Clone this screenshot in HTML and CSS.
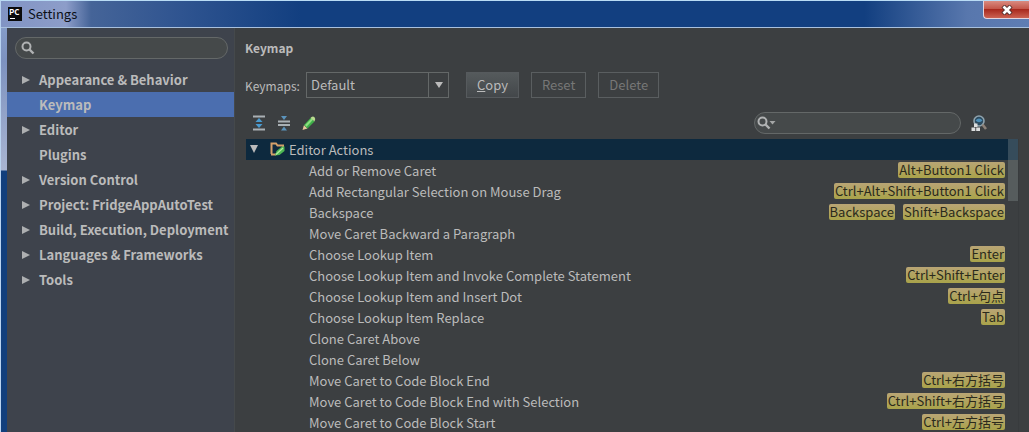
FILE: index.html
```html
<!DOCTYPE html>
<html lang="en">
<head>
    <meta charset="UTF-8">
    <meta name="viewport" content="width=device-width, initial-scale=1.0">
    <title>Settings</title>
    <link rel="stylesheet" href="styles.css">
</head>
<body>

    <div class="window">
        <header class="titlebar">
            <svg class="app-icon" width="14" height="14" viewBox="0 0 14 14">
                <rect width="14" height="14" fill="#0b0b0b"/>
                <text class="app-letters" x="1" y="8">PC</text>
                <rect x="2" y="11" width="5" height="1" fill="#fff"/>
            </svg>
            <span class="title">Settings</span>
            <button class="close-btn" aria-label="Close">
                <svg width="12" height="10" viewBox="0 0 12 10">
                    <path d="M2 1L10 9M10 1L2 9" stroke="#4a2b2b" stroke-width="4.4"/>
                    <path d="M2.5 1.5L9.5 8.5M9.5 1.5L2.5 8.5" stroke="#fff" stroke-width="2.8"/>
                </svg>
            </button>
        </header>

        <div class="content">
            <aside class="sidebar">
                <label class="search">
                    <svg width="14" height="14" viewBox="0 0 14 14">
                        <circle cx="5.5" cy="5.5" r="4" fill="none" stroke="#b0b2b3" stroke-width="2"/>
                        <path d="M8.5 8.5L12.5 12.5" stroke="#b0b2b3" stroke-width="2.4"/>
                    </svg>
                    <input type="text" aria-label="Search settings">
                </label>
                <nav class="menu">
                    <a href="#" class="parent">Appearance &amp; Behavior</a>
                    <a href="#" class="selected">Keymap</a>
                    <a href="#" class="parent">Editor</a>
                    <a href="#">Plugins</a>
                    <a href="#" class="parent">Version Control</a>
                    <a href="#" class="parent">Project: FridgeAppAutoTest</a>
                    <a href="#" class="parent">Build, Execution, Deployment</a>
                    <a href="#" class="parent">Languages &amp; Frameworks</a>
                    <a href="#" class="parent">Tools</a>
                </nav>
            </aside>

            <main class="main">
                <h1>Keymap</h1>

                <div class="keymaps">
                    <label for="keymap">Keymaps:</label>
                    <div class="combo">
                        <select id="keymap">
                            <option>Default</option>
                        </select>
                        <span class="combo-arrow"></span>
                    </div>
                    <button class="btn copy"><u>C</u>opy</button>
                    <button class="btn" disabled>Reset</button>
                    <button class="btn" disabled>Delete</button>
                </div>

                <div class="toolbar">
                    <button class="tool" aria-label="Expand all">
                        <svg width="14" height="16" viewBox="0 0 14 16">
                            <path d="M1 1.5H13M1 14.5H13" stroke="#a9b0b4" stroke-width="2"/>
                            <path d="M7 3L10.5 7H3.5ZM7 13L10.5 9H3.5Z" fill="#4a9bd0"/>
                        </svg>
                    </button>
                    <button class="tool" aria-label="Collapse all">
                        <svg width="14" height="16" viewBox="0 0 14 16">
                            <path d="M1 6.5H13M1 10H13" stroke="#a9b0b4" stroke-width="2"/>
                            <path d="M4 1H10L7 5ZM7 11.5L10 15.5H4Z" fill="#5b93bb"/>
                        </svg>
                    </button>
                    <button class="tool" aria-label="Edit shortcut">
                        <svg width="14" height="16" viewBox="0 0 14 16">
                            <path d="M0.5 15L2 10L5.5 13.5Z" fill="#e7c79c"/>
                            <path d="M2 10L8.5 3L12.5 6.5L5.5 13.5Z" fill="#3fae49"/>
                            <path d="M3 10L9.5 3.5L11 4.8L4.5 11.8Z" fill="#8be07f"/>
                            <path d="M8.5 3L9.5 2Q11 1 12.5 2.2Q14 3.8 12.5 6.5Z" fill="#b9dc8f"/>
                        </svg>
                    </button>
                    <label class="search action-search">
                        <svg width="20" height="14" viewBox="0 0 20 14">
                            <circle cx="5.5" cy="5.5" r="4" fill="none" stroke="#b0b2b3" stroke-width="2"/>
                            <path d="M8.5 8.5L12.5 12.5" stroke="#b0b2b3" stroke-width="2.4"/>
                            <path d="M12.5 5H18.5L15.5 8.5Z" fill="#a4a6a6"/>
                        </svg>
                        <input type="text" aria-label="Search actions">
                    </label>
                    <button class="tool" aria-label="Find actions by shortcut">
                        <svg width="16" height="17" viewBox="0 0 16 17">
                            <circle cx="8" cy="6" r="5" fill="#2c4a5e" stroke="#8fa3ae" stroke-width="1.6"/>
                            <path d="M4.5 5.5Q8 1.5 11.5 5.5Q8 9 4.5 5.5Z" fill="#4d8fb8"/>
                            <path d="M11.5 9.5L15 14" stroke="#8c8178" stroke-width="2.6"/>
                            <path d="M3 8.5H6.5V12H3ZM0.5 12.5H4.3V16H0.5ZM5.2 12.5H9V16H5.2Z" fill="#dcdedf"/>
                        </svg>
                    </button>
                </div>

                <div class="tree">
                    <ul class="actions">
                        <li class="group">
                            <svg class="folder" width="16" height="14" viewBox="0 0 16 14">
                                <path d="M1.5 12V1.5H6L7.5 3.5H13V6" fill="none" stroke="#d3a06a" stroke-width="2"/>
                                <path d="M1 12.5H6" stroke="#d3a06a" stroke-width="2"/>
                                <path d="M5 13.5L6.5 9L12 4.5H14.5V9L9.5 13Z" fill="#4db653"/>
                                <path d="M6 12.5L13 6" stroke="#b5efa0" stroke-width="1.2"/>
                            </svg>
                            <span>Editor Actions</span>
                        </li>
                        <li><span>Add or Remove Caret</span><kbd>Alt+Button1 Click</kbd></li>
                        <li><span>Add Rectangular Selection on Mouse Drag</span><kbd>Ctrl+Alt+Shift+Button1 Click</kbd></li>
                        <li><span>Backspace</span><kbd>Backspace</kbd><kbd>Shift+Backspace</kbd></li>
                        <li><span>Move Caret Backward a Paragraph</span></li>
                        <li><span>Choose Lookup Item</span><kbd>Enter</kbd></li>
                        <li><span>Choose Lookup Item and Invoke Complete Statement</span><kbd>Ctrl+Shift+Enter</kbd></li>
                        <li><span>Choose Lookup Item and Insert Dot</span><kbd>Ctrl+句点</kbd></li>
                        <li><span>Choose Lookup Item Replace</span><kbd>Tab</kbd></li>
                        <li><span>Clone Caret Above</span></li>
                        <li><span>Clone Caret Below</span></li>
                        <li><span>Move Caret to Code Block End</span><kbd>Ctrl+右方括号</kbd></li>
                        <li><span>Move Caret to Code Block End with Selection</span><kbd>Ctrl+Shift+右方括号</kbd></li>
                        <li><span>Move Caret to Code Block Start</span><kbd>Ctrl+左方括号</kbd></li>
                    </ul>
                    <div class="scroll-thumb"></div>
                </div>
            </main>
        </div>
    </div>

</body>
</html>
```
FILE: styles.css
```css
/* General Styles */
* {
    box-sizing: border-box;
}

body {
    margin: 0;
    font-family: "Noto Sans CJK SC", sans-serif;
    font-size: 13px;
    color: #bbbbbb;
    background: #3c3f41;
}

button, input, select {
    font: inherit;
    color: inherit;
}

.window {
    display: flex;
    flex-direction: column;
    height: 100vh;
    overflow: hidden;
    padding-left: 6px;
    border-top: 1px solid #b9dcf5;
    border-left: 1px solid #b9d3f0;
    background: linear-gradient(#8ba4cf 0, #7d92bf 60px, #a9b5d2 169px, #123f7c 170px);
}

/* Title bar */
.titlebar {
    display: flex;
    align-items: center;
    flex: none;
    height: 27px;
    margin-left: -6px;
    padding-left: 7px;
    border-bottom: 1px solid #a8c0de;
    background: linear-gradient(to right, #8194c4 0, #8d9dc9 65px, #456498 90px, #2f5490 180px, #123f80 300px, #123f80 84%, #5877ad 94%, #5f7db3 100%);
}

.app-letters {
    font-size: 8px;
    font-weight: bold;
    fill: #fff;
}

.title {
    margin-left: 6px;
    padding-bottom: 2px;
    color: #0c1018;
}

.close-btn {
    display: flex;
    align-items: center;
    justify-content: center;
    align-self: flex-start;
    width: 46px;
    height: 18px;
    margin-left: auto;
    padding: 0;
    border: 1px solid #e3d5df;
    border-top: none;
    border-right: none;
    border-radius: 0 0 0 4px;
    background: linear-gradient(#d98b80, #c4574a 45%, #a82a1e 50%, #cc6252);
}

.content {
    display: flex;
    flex: 1;
    min-height: 0;
}

/* Sidebar */
.sidebar {
    flex: none;
    width: 228px;
    padding-top: 9px;
    background: #3e434c;
    border-right: 1px solid #45494b;
}

.search {
    display: flex;
    align-items: center;
    height: 22px;
    padding: 0 5px;
    border: 1px solid #646868;
    border-radius: 11px;
    background: #45494a;
}

.search input {
    flex: 1;
    min-width: 0;
    border: none;
    outline: none;
    background: none;
}

.sidebar .search {
    margin: 0 6px 0 8px;
}

.menu {
    margin-top: 8px;
}

.menu a {
    display: flex;
    align-items: center;
    height: 25px;
    padding-left: 32px;
    font-weight: bold;
    color: #bbbbbb;
    text-decoration: none;
}

.menu .parent {
    padding-left: 15px;
}

.menu .parent::before {
    content: "";
    margin-right: 9px;
    border-left: 8px solid #adafb1;
    border-top: 4px solid transparent;
    border-bottom: 4px solid transparent;
}

.menu .selected {
    background: #4b6eaf;
}

/* Main panel */
.main {
    display: flex;
    flex-direction: column;
    flex: 1;
    min-width: 0;
    padding: 10px 10px 0;
    background: #3c3f41;
}

h1 {
    margin: 0;
    font-size: 12px;
    line-height: 20px;
}

.keymaps {
    display: flex;
    align-items: center;
    margin-top: 14px;
}

.keymaps label {
    width: 61px;
    font-size: 12px;
}

.combo {
    display: flex;
    position: relative;
    width: 143px;
    height: 26px;
    margin-right: 17px;
    border: 1px solid #646868;
}

.combo select {
    width: 100%;
    padding: 0 4px 2px;
    appearance: none;
    border: none;
    background: none;
}

.combo-arrow {
    position: absolute;
    top: 0;
    right: 0;
    display: flex;
    align-items: center;
    justify-content: center;
    width: 20px;
    height: 100%;
    border-left: 1px solid #646868;
    pointer-events: none;
}

.combo-arrow::before {
    content: "";
    border-top: 6px solid #bbbbbb;
    border-left: 4px solid transparent;
    border-right: 4px solid transparent;
}

.btn {
    height: 26px;
    margin-right: 12px;
    padding: 0 10px 2px;
    border: 1px solid #5a5e60;
    background: #3c3f41;
}

.btn:disabled {
    color: #777777;
}

.copy {
    border-color: #565a5d;
    background: linear-gradient(#555a5c, #43474a);
}

.toolbar {
    display: flex;
    align-items: center;
    height: 22px;
    margin: 14px 32px 5px 7px;
}

.tool {
    display: flex;
    margin-right: 11px;
    padding: 0;
    border: none;
    background: none;
}

.action-search {
    width: 207px;
    margin-left: auto;
    padding: 0 2px;
}

.action-search + .tool {
    margin: 0 0 0 10px;
}

/* Actions tree */
.tree {
    position: relative;
    margin-left: 1px;
    border-right: 1px solid #383b3d;
}

.actions {
    margin: 0;
    padding: 0;
    list-style: none;
}

.actions li {
    display: flex;
    align-items: center;
    height: 21px;
    padding: 0 13px 1px 63px;
}

.actions li span {
    margin-right: auto;
}

.actions .group {
    padding-left: 4px;
    background: #0d293e;
}

.group::before {
    content: "";
    border-top: 8px solid #bbbbbb;
    border-left: 4px solid transparent;
    border-right: 4px solid transparent;
}

.folder {
    margin: 0 3px 0 12px;
}

kbd {
    height: 16px;
    margin-left: 8px;
    padding: 0 1px;
    border-radius: 2px;
    font-family: inherit;
    font-size: 13px;
    line-height: 16px;
    color: #2b2a1c;
    background: linear-gradient(#b9a575, #a9a34a);
}

.scroll-thumb {
    position: absolute;
    top: 0;
    right: 0;
    width: 10px;
    height: 62px;
    background: rgba(150, 160, 160, 0.3);
}
```
